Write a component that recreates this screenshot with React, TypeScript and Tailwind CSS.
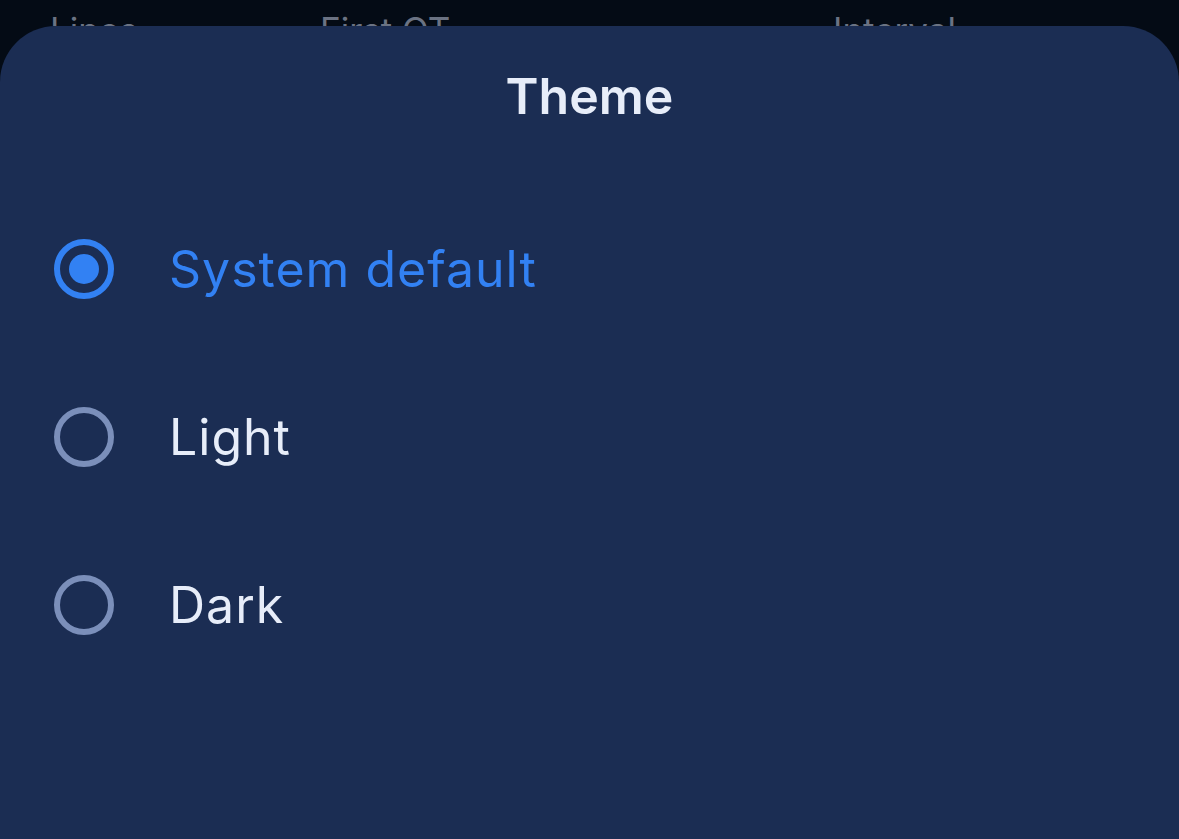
const options = [
  { id: "system", label: "System default" },
  { id: "light", label: "Light" },
  { id: "dark", label: "Dark" },
];

function Radio({ checked }: { checked: boolean }) {
  return (
    <div
      className={`flex size-[60px] shrink-0 items-center justify-center rounded-full border-[6px] ${
        checked ? "border-[#3281f3]" : "border-[#7b8fba]"
      }`}
    >
      {checked && <div className="size-[30px] rounded-full bg-[#3281f3]" />}
    </div>
  );
}

export default function App() {
  const selected = "system";

  return (
    <div className="flex h-[839px] w-full flex-col overflow-hidden bg-[#040b15] font-['Inter',sans-serif]">
      {/* List header behind the sheet */}
      <div className="flex h-[26px] shrink-0 overflow-hidden pl-[50px] pt-[10px] text-[35px] leading-[40px] text-[#6b7383]">
        <span className="w-[270px]">Lines</span>
        <span className="w-[513px]">First OT</span>
        <span>Interval</span>
      </div>

      {/* Sheet */}
      <div className="flex flex-1 flex-col rounded-t-[56px] bg-[#1b2d53]">
        <h2 className="flex h-[141px] items-center justify-center text-[50px] font-semibold text-[#e7edf9]">
          Theme
        </h2>
        <div className="mt-[18px] flex flex-col">
          {options.map((o) => (
            <div key={o.id} className="flex h-[168px] items-center gap-[55px] pl-[54px]">
              <Radio checked={o.id === selected} />
              <span
                className={`text-[50px] leading-none tracking-[0.02em] ${
                  o.id === selected ? "text-[#3281f3]" : "text-[#e7edf9]"
                }`}
              >
                {o.label}
              </span>
            </div>
          ))}
        </div>
      </div>
    </div>
  );
}
